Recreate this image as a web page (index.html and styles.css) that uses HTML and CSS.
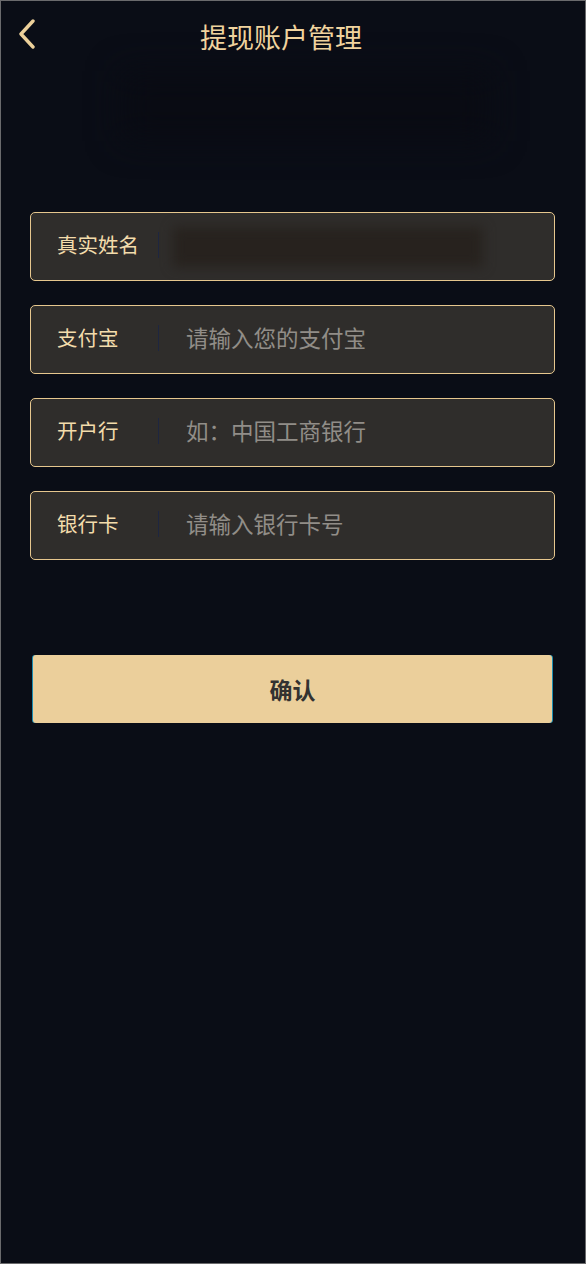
FILE: index.html
```html
<!DOCTYPE html>
<html lang="zh-CN">
<head>
<meta charset="utf-8">
<title>提现账户管理</title>
<link rel="stylesheet" href="styles.css">
</head>
<body>
<div class="page">
  <header class="header">
    <a class="back" href="#" aria-label="返回">
      <svg width="18" height="30" viewBox="0 0 18 30"><path d="M15 2 L3 15 L15 28" fill="none" stroke="#ecd09a" stroke-width="3.4" stroke-linecap="round" stroke-linejoin="round"/></svg>
    </a>
    <h1 class="title">提现账户管理</h1>
  </header>
  <div class="blur-top"></div>
  <form class="form">
    <label class="field">
      <span class="label">真实姓名</span>
      <span class="divider"></span>
      <span class="value blurred"></span>
    </label>
    <label class="field">
      <span class="label">支付宝</span>
      <span class="divider"></span>
      <input class="input" type="text" placeholder="请输入您的支付宝">
    </label>
    <label class="field">
      <span class="label">开户行</span>
      <span class="divider"></span>
      <input class="input" type="text" placeholder="如：中国工商银行">
    </label>
    <label class="field">
      <span class="label">银行卡</span>
      <span class="divider"></span>
      <input class="input" type="text" placeholder="请输入银行卡号">
    </label>
    <button class="submit" type="button">确认</button>
  </form>
</div>
</body>
</html>
```
FILE: styles.css
```css
* { box-sizing: border-box; }
html, body { margin: 0; padding: 0; background: #0a0d16; }
body { font-family: "Noto Sans CJK SC", "Noto Sans", sans-serif; }
.page {
  width: 586px;
  height: 1264px;
  border: 1px solid #6a6a6c;
  background: #0a0d16;
  position: relative;
  overflow: hidden;
}
.header {
  height: 76px;
  display: flex;
  align-items: center;
  justify-content: center;
  position: relative;
}
.back {
  position: absolute;
  left: 17px;
  top: 18px;
  display: block;
  width: 18px;
  height: 30px;
}
.back svg { display: block; }
.title {
  margin: 0 24px 0 0;
  font-size: 27px;
  font-weight: 400;
  color: #f0d39e;
  line-height: 76px;
  position: relative;
  top: -2px;
  z-index: 1;
}
.blur-top {
  position: absolute;
  left: 120px;
  top: 70px;
  width: 370px;
  height: 70px;
  background: #090b13;
  filter: blur(16px);
}
.form {
  margin: 135px 0 0 29px;
  width: 525px;
  display: flex;
  flex-direction: column;
  position: relative;
}
.field {
  height: 69px;
  border: 1px solid #e6c78e;
  border-radius: 5px;
  background: #2f2d2b;
  display: flex;
  align-items: center;
  padding-left: 26px;
  margin-bottom: 24px;
}
.label {
  width: 101px;
  font-size: 20.5px;
  color: #f3dcab;
  line-height: 1;
  margin-top: -4px;
  white-space: nowrap;
}
.divider {
  width: 1px;
  height: 26px;
  background: #1e2640;
  margin-top: -4px;
}
.value {
  margin-left: 14px;
  height: 40px;
  width: 310px;
}
.blurred {
  background: #27221e;
  filter: blur(6px);
}
.input {
  margin-left: 27px;
  margin-top: -6px;
  flex: 1;
  background: transparent;
  border: 0;
  outline: none;
  font-family: inherit;
  font-size: 22.5px;
  color: #918d88;
  padding: 0;
  height: 40px;
}
.input::placeholder { color: #918d88; }
.submit {
  margin: 71px 0 0 3px;
  width: 519px;
  height: 68px;
  border: 0;
  border-radius: 3px;
  background: #ebcf9b;
  color: #333231;
  font-family: inherit;
  font-size: 23px;
  font-weight: 700;
  box-shadow: -1px 0 0 #1c8db0, 1px 0 0 #1c8db0;
}
```
